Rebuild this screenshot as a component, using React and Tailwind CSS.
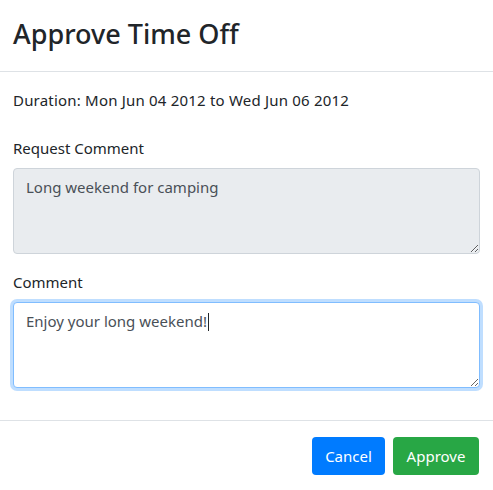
export default function App() {
  return (
    <div className="w-[493px] h-[490px] bg-white text-[#212529] font-['Noto_Sans',sans-serif] overflow-hidden">
      {/* header */}
      <div className="h-[72px] flex items-center px-[13px] border-b border-[#dee2e6]">
        <h3 className="text-[27px] font-medium leading-tight -mt-[4px]">Approve Time Off</h3>
      </div>

      {/* body */}
      <div className="px-[13px] pt-[16px]">
        <p className="text-[15px] leading-6 tracking-[0.2px]">Duration: Mon Jun 04 2012 to Wed Jun 06 2012</p>

        <div className="mt-[24px]">
          <label className="block text-[15px] leading-6 mb-[8px]">Request Comment</label>
          <textarea
            readOnly
            defaultValue="Long weekend for camping"
            className="block w-full h-[86px] px-[12px] py-[6px] text-[15px] leading-6 text-[#495057] bg-[#e9ecef] border border-[#ced4da] rounded-[4px] outline-none"
          />
        </div>

        <div className="mt-[16px] relative">
          <label className="block text-[15px] leading-6 mb-[8px]">Comment</label>
          <textarea
            defaultValue="Enjoy your long weekend!"
            className="block w-full h-[86px] px-[12px] py-[6px] text-[15px] leading-6 text-[#495057] bg-white border border-[#80bdff] rounded-[4px] outline-none shadow-[0_0_0_3px_rgba(0,123,255,0.25)]"
          />
          {/* text caret */}
          <span className="absolute left-[195px] top-[43px] w-px h-[18px] bg-[#212529]" />
        </div>
      </div>

      {/* footer */}
      <div className="mt-[32px] border-t border-[#dee2e6] flex justify-end gap-[8px] px-[14px] pt-[16px]">
        <button className="h-[38px] w-[73px] rounded-[4px] bg-[#007bff] text-white text-[15px]">Cancel</button>
        <button className="h-[38px] w-[86px] rounded-[4px] bg-[#28a745] text-white text-[15px]">Approve</button>
      </div>
    </div>
  );
}
